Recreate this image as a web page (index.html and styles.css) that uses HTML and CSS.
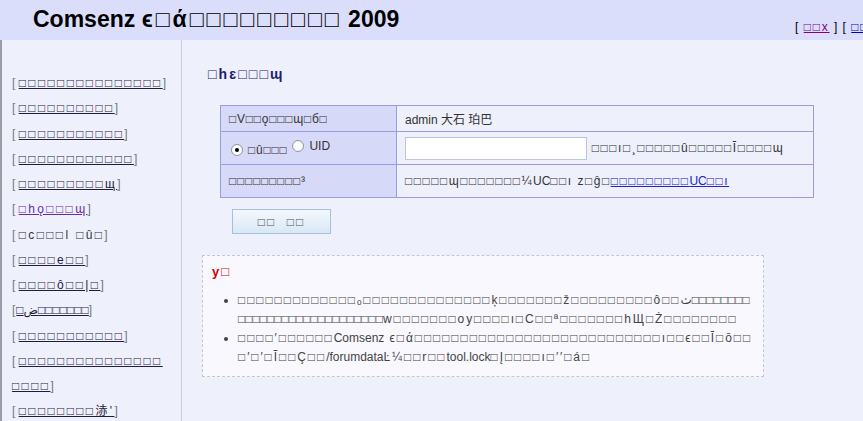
FILE: index.html
```html
<!DOCTYPE html>
<html>
<head>
<meta charset="utf-8">
<title>Comsenz</title>
<link rel="stylesheet" href="styles.css">
</head>
<body>
<div class="top">
  <h1 class="brand">Comsenz <span class="wide">ϵ□ά□□□□□□□□□</span> 2009</h1>
  <div class="topnav">[ <a class="seen" href="#">□□x</a> ] [ <a href="#">□□□□</a> ]</div>
</div>
<div class="frame">
  <ul class="menu">
    <li>[<a href="#">□□□□□□□□□□□□□□□</a>]</li>
    <li>[<a href="#">□□□□□□□□□□</a>]</li>
    <li>[<a href="#">□□□□□□□□□□□</a>]</li>
    <li>[<a href="#">□□□□□□□□□□□□</a>]</li>
    <li>[<a href="#">□□□□□□□□□щ</a>]</li>
    <li>[<a class="seen" href="#">□hǫ□□□ɰ</a>]</li>
    <li>[<span class="cur">□c□□□l □û□</span>]</li>
    <li>[<a href="#">□□□□e□□</a>]</li>
    <li>[<a href="#">□□□□ô□□|□</a>]</li>
    <li>[<a href="#">□ض□□□□□□□</a>]</li>
    <li>[<a href="#">□□□□□□□□□□□</a>]</li>
    <li>[<a href="#">□□□□□□□□□□□□□□□<br>□□□□</a>]</li>
    <li>[<a href="#">□□□□□□□□浾'</a>]</li>
  </ul>
  <main class="content">
    <h2 class="title">□hɛ□□□ɰ</h2>
    <form class="form">
      <table class="grid">
        <tr class="r1">
          <th>□V□□ǫ□□□ɰ□б□</th>
          <td class="plain">admin 大石 珀巴</td>
        </tr>
        <tr class="r2">
          <th><label class="opt"><input type="radio" name="t" checked>□û□□□</label><label class="opt"><input type="radio" name="t"><span class="n">UID</span></label></th>
          <td><input class="field" type="text"> □□□ı□¸□□□□□û□□□□□Ī□□□□ɰ</td>
        </tr>
        <tr class="r3">
          <th>□□□□□□□□□³</th>
          <td>□□□□□ɰ□□□□□□□¼<span class="n">UC</span>□□ı z□ĝ□<a href="#">□□□□□□□□□<span class="n">UC</span>□□ı</a></td>
        </tr>
      </table>
      <button class="btn" type="button">□□&nbsp;&nbsp;□□</button>
    </form>
    <div class="notice">
      <h3>у□</h3>
      <ul>
        <li>□□□□□□□□□□□□□ₒ□□□□□□□□□□□□□□ķ□□□□□□□ž□□□□□□□□□ô□□ٺ□□□□□□□□<br>□□□□□□□□□□□□□□□□□□□□w□□□□□□□oy□□□□ı□C□□ª□□□□□□□hЩ□Ż□□□□□□□□</li>
        <li>□□□□′□□□□□□<span class="n">Comsenz</span> ϵ□ά□□□□□□□□□□□□□□□□□□□□□□□□□□□ı□□ϵ□□Ī□ō□□<br>□′□′□Ĩ□□Ç□□<span class="n">/forumdata</span>Ŀ¼□□r□□<span class="n">tool.lock</span>□Į□□□□ı□′′□á□</li>
      </ul>
    </div>
  </main>
</div>
</body>
</html>
```

FILE: styles.css
```css
html, body {
  margin: 0;
  padding: 0;
}
body {
  font-family: "Liberation Sans", "DejaVu Sans", "Noto Sans CJK SC", sans-serif;
  font-size: 12px;
  color: #333;
  background: #eef0fc;
  overflow: hidden;
}
a { color: #0000cc; }
a.seen { color: #800080; }
.n { letter-spacing: 0; }

.top {
  display: flex;
  align-items: flex-start;
  height: 40px;
  background: #dbdefa;
  overflow: hidden;
}
.brand {
  flex: none;
  box-sizing: border-box;
  width: 795px;
  margin: 0;
  padding: 6px 0 0 33px;
  font-size: 23px;
  line-height: 27px;
  font-weight: bold;
  color: #000;
}
.brand .wide {
  letter-spacing: 3px;
}
.topnav {
  flex: none;
  white-space: nowrap;
  padding-top: 19px;
  line-height: 16px;
  color: #000;
  letter-spacing: 1px;
}
.topnav a { letter-spacing: 1.8px; }

.frame {
  display: flex;
  min-height: calc(100vh - 40px);
}
.menu {
  flex: none;
  box-sizing: border-box;
  width: 182px;
  margin: 0;
  padding: 31px 0 0 10px;
  list-style: none;
  background: #eef0fb;
  border-left: 2px solid #9c9ca8;
  border-right: 1px solid #c9cbe2;
  line-height: 25.25px;
  color: #777;
  white-space: nowrap;
  letter-spacing: 2.35px;
}
.menu a {
  color: #1e1e3c;
  margin-left: 1px;
}
.menu a.seen { color: #6a2aa8; }
.menu .cur { color: #333; margin-left: 1px; }

.content {
  flex: 1;
  padding: 24px 0 0 20px;
}
.title {
  margin: 0 0 0 6px;
  font-size: 14px;
  line-height: 20px;
  font-weight: bold;
  color: #1d2170;
  letter-spacing: 2.1px;
}
.form {
  margin: 21px 0 0 0;
}
.grid {
  margin-left: 18px;
  width: 594px;
  border-collapse: collapse;
  border: 1px solid #9b9be0;
}
.grid th, .grid td {
  border: 1px solid #9b9be0;
  padding: 0 8px;
  text-align: left;
  font-weight: normal;
  white-space: nowrap;
}
.grid th {
  width: 159px;
  background: #d7d9f8;
  letter-spacing: 0.75px;
}
.grid td {
  background: #eef0fc;
  letter-spacing: 1.5px;
}
.grid td.plain { letter-spacing: 0; }
.grid .r1 { height: 26px; }
.grid .r2 { height: 33px; }
.grid .r3 { height: 33px; }
.opt {
  display: inline-flex;
  align-items: center;
  margin-right: 3px;
}
.opt input {
  -webkit-appearance: none;
  appearance: none;
  box-sizing: border-box;
  width: 12px;
  height: 12px;
  margin: 0 5px 0 2px;
  border: 1px solid #8a94a8;
  border-radius: 50%;
  background: #fff;
  display: inline-grid;
  place-content: center;
}
.opt input:checked::before {
  content: "";
  width: 4px;
  height: 4px;
  border-radius: 50%;
  background: #000;
}
.field {
  box-sizing: border-box;
  width: 182px;
  height: 23px;
  border: 1px solid #bcc6d8;
  background: #fff;
  vertical-align: middle;
  margin: 0;
}
.grid a { color: #2222cc; }

.btn {
  display: block;
  margin: 11px 0 0 30px;
  box-sizing: border-box;
  width: 99px;
  height: 25px;
  padding: 0;
  border: 1px solid #a6bfda;
  background: linear-gradient(#f3f8fd, #d9e8f6);
  font: 12px "Liberation Sans", "DejaVu Sans", sans-serif;
  letter-spacing: 2px;
  color: #555;
}

.notice {
  box-sizing: border-box;
  width: 562px;
  margin-top: 21px;
  padding: 7px 9px 9px 9px;
  border: 1px dashed #c6c6d2;
  background: #f8f8fe;
}
.notice h3 {
  margin: 0;
  font-size: 13px;
  line-height: 18px;
  color: #cc0000;
  font-weight: bold;
  letter-spacing: 2px;
}
.notice ul {
  margin: 10px 0 0 0;
  padding-left: 26px;
  line-height: 19px;
  white-space: nowrap;
  color: #444;
  letter-spacing: 1.9px;
}
```
